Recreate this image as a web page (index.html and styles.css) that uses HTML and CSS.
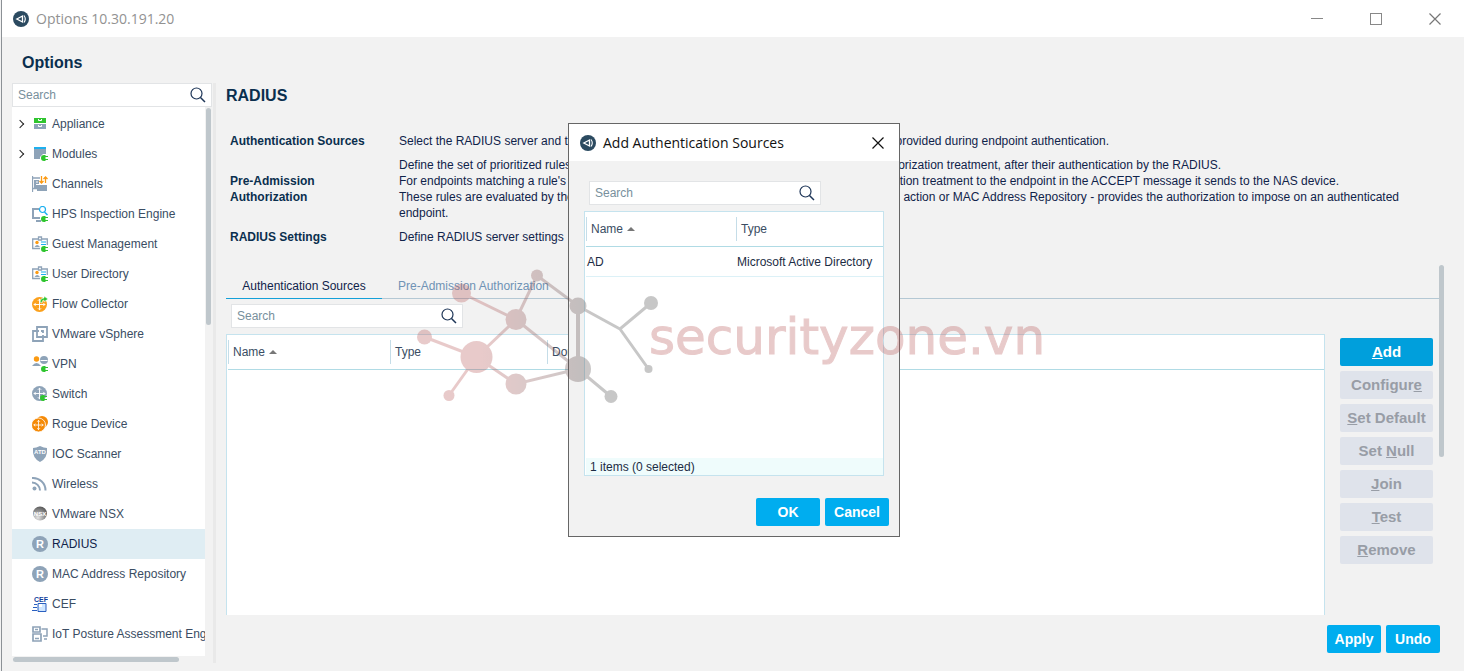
FILE: index.html
```html
<!DOCTYPE html>
<html lang="en">
<head>
<meta charset="utf-8">
<title>Options 10.30.191.20</title>
<link rel="stylesheet" href="styles.css">
</head>
<body>
<svg class="defs" aria-hidden="true">
  <symbol id="logo" viewBox="0 0 16 16"><circle cx="8" cy="8" r="8" fill="#2b4a60"/><path d="M3.800 8 9.500 5V11Z" fill="none" stroke="#fff" stroke-width="1.300"/><path d="M11 4.500Q13.600 8 11 11.500" fill="none" stroke="#fff" stroke-width="1.100"/></symbol>
  <symbol id="search" viewBox="0 0 16 16"><circle cx="6.500" cy="6.500" r="5.500" fill="none" stroke="#1d3557" stroke-width="1.200"/><path d="M10.500 10.500 15 15" stroke="#1d3557" stroke-width="1.500"/></symbol>
  <symbol id="close" viewBox="0 0 12 12"><path d="M.5.5 11.500 11.500M11.500.5.5 11.500" stroke="currentColor" stroke-width="1.200"/></symbol>
  <symbol id="plug" viewBox="0 0 7 6"><path d="M4.500 0H3a3 3 0 0 0-3 3 3 3 0 0 0 3 3h1.500V5H7V4H4.500V2H7V1H4.500Z" fill="#2fc52f"/></symbol>
  <symbol id="appliance" viewBox="0 0 16 16"><path d="M2 2h12v5H2Z" fill="#2fc52f"/><path d="M2 8h12v5H2Z" fill="#8ea3b8"/><path d="M6.500 3v1.500h3V3M6.500 9v1.500h3V9" fill="none" stroke="#fff"/></symbol>
  <symbol id="modules" viewBox="0 0 16 16"><path d="M2 1h12v12H2Z" fill="#8ea3b8"/><path d="M2 1h12v2H2Z" fill="#1db0ef"/><path d="M8 14V11l3-3h4v6Z" fill="#fff"/><use href="#plug" x="9" y="9" width="7" height="6"/></symbol>
  <symbol id="channels" viewBox="0 0 16 16"><path d="M.5 0v16M0 2h8M0 12.500h5" stroke="#8ea3b8" stroke-width="1.300"/><path d="M2 4h5v5h8v6H5v-3H2Z" fill="#8ea3b8"/><path d="M4 6h2M4 8.500h3" stroke="#fff"/><path d="M9.500 0v7M7.500 5l2 2 2-2M13.500 7V1M11.500 3l2-2 2 2" fill="none" stroke="#fb9a12" stroke-width="1.300"/></symbol>
  <symbol id="hps" viewBox="0 0 16 16"><path d="M7 3H1v9h7M4 15h5" fill="none" stroke="#8ea3b8" stroke-width="2"/><circle cx="10.500" cy="3.500" r="3" fill="#fff" stroke="#1db0ef" stroke-width="1.200"/><path d="m12.500 6 3 3" stroke="#1db0ef" stroke-width="1.500"/><use href="#plug" x="9" y="10" width="7" height="6"/></symbol>
  <symbol id="card" viewBox="0 0 16 16"><path d="M6 3H.7v9.500H8M10 3h5.300v6M6.500 1h3v3h-3Z" fill="none" stroke="#8ea3b8" stroke-width="1.300"/><circle cx="5" cy="6.500" r="1.700" fill="#fb9a12"/><path d="M2.500 11q2.500-4 5.500 0Z" fill="#8ea3b8"/><path d="M9 6h5M9 8.500h5" stroke="#1db0ef" stroke-width="1.200"/><use href="#plug" x="9" y="10" width="7" height="6"/></symbol>
  <symbol id="cross" viewBox="0 0 16 16"><path d="M8 2v12M2 8h12M6.300 4 8 2.300 9.700 4M6.300 12 8 13.700 9.700 12M4 6.300 2.300 8 4 9.700M12 6.300 13.700 8 12 9.700" fill="none" stroke="#fff"/></symbol>
  <symbol id="flow" viewBox="0 0 16 16"><circle cx="7.500" cy="8.500" r="7.500" fill="#fba01c"/><use href="#cross" y="1" width="15" height="15"/><path d="M8 6q0-4 4-4V0l4 3-4 3V4q-2 0-2 3Z" fill="#2fc52f" stroke="#fff" stroke-width=".6"/></symbol>
  <symbol id="vsphere" viewBox="0 0 16 16"><path d="M5 5V1h10v10h-4M5 5H1v10h10v-4M5 5h2M5 5v6h6V9M9 5h2v2" fill="none" stroke="#8ea3b8" stroke-width="1.800"/></symbol>
  <symbol id="vpn" viewBox="0 0 16 16"><circle cx="4.500" cy="3" r="2.700" fill="#fb9a12"/><path d="M0 10q4.500-6 9 0Z" fill="#8ea3b8"/><circle cx="12" cy="4" r="4" fill="#8ea3b8"/><path d="M8.500 4.500h7" stroke="#fff" fill="none"/><use href="#plug" x="9" y="10" width="7" height="6"/></symbol>
  <symbol id="switch" viewBox="0 0 16 16"><circle cx="7.500" cy="7.500" r="7.500" fill="#8ea3b8"/><use href="#cross" width="15" height="15"/><use href="#plug" x="8" y="9" width="7" height="6"/></symbol>
  <symbol id="rogue" viewBox="0 0 16 16"><circle cx="10" cy="6" r="6" fill="#f58a07"/><circle cx="6.500" cy="9" r="7" fill="#f58a07" stroke="#fff" stroke-width=".8"/><use href="#cross" y="2.500" width="13" height="13"/></symbol>
  <symbol id="wireless" viewBox="0 0 16 16"><circle cx="2.500" cy="12.500" r="2" fill="#8ea3b8"/><path d="M0 6.500a8 8 0 0 1 8 8M0 2a12.500 12.500 0 0 1 13.500 12.500" fill="none" stroke="#8ea3b8" stroke-width="2"/></symbol>
  <symbol id="iot" viewBox="0 0 16 16"><path d="M1 1h7v5H1ZM1 8h8v7H1Z" fill="none" stroke="#8ea3b8" stroke-width="1.700"/><path d="M3 3.500h3M3 12.500h4M9.500 3H15v7h-4M12 13h3" fill="none" stroke="#8ea3b8" stroke-width="1.500"/></symbol>
</svg>

<div class="window">
  <header class="titlebar">
    <svg class="icon"><use href="#logo"/></svg>
    <span class="window-title">Options 10.30.191.20</span>
    <div class="controls">
      <button aria-label="Minimize"><i class="minimize"></i></button>
      <button aria-label="Maximize"><i class="maximize"></i></button>
      <button aria-label="Close"><svg class="cross"><use href="#close"/></svg></button>
    </div>
  </header>

  <div class="body">
    <aside class="sidebar">
      <h1>Options</h1>
      <div class="panel">
        <label class="search wide"><input type="text" placeholder="Search" aria-label="Search options"><svg class="icon"><use href="#search"/></svg></label>
        <div class="tree-area">
          <ul class="tree">
            <li><a href="#"><i class="arrow"></i><svg class="icon"><use href="#appliance"/></svg>Appliance</a></li>
            <li><a href="#"><i class="arrow"></i><svg class="icon"><use href="#modules"/></svg>Modules</a></li>
            <li><a href="#"><svg class="icon"><use href="#channels"/></svg>Channels</a></li>
            <li><a href="#"><svg class="icon"><use href="#hps"/></svg>HPS Inspection Engine</a></li>
            <li><a href="#"><svg class="icon"><use href="#card"/></svg>Guest Management</a></li>
            <li><a href="#"><svg class="icon"><use href="#card"/></svg>User Directory</a></li>
            <li><a href="#"><svg class="icon"><use href="#flow"/></svg>Flow Collector</a></li>
            <li><a href="#"><svg class="icon"><use href="#vsphere"/></svg>VMware vSphere</a></li>
            <li><a href="#"><svg class="icon"><use href="#vpn"/></svg>VPN</a></li>
            <li><a href="#"><svg class="icon"><use href="#switch"/></svg>Switch</a></li>
            <li><a href="#"><svg class="icon"><use href="#rogue"/></svg>Rogue Device</a></li>
            <li><a href="#"><svg class="icon" viewBox="0 0 16 16"><path d="M8 0q4 2 7 2 1 10-7 14Q0 12 1 2q3 0 7-2Z" fill="#8ea3b8"/><text x="8" y="7.500" font-size="6" text-anchor="middle" class="glyph">ATD</text></svg>IOC Scanner</a></li>
            <li><a href="#"><svg class="icon"><use href="#wireless"/></svg>Wireless</a></li>
            <li><a href="#"><svg class="icon" viewBox="0 0 16 16"><radialGradient id="ball" cx=".35" cy=".8" r=".9"><stop stop-color="#e4e4e4"/><stop offset="1" stop-color="#4a4a4a"/></radialGradient><circle cx="8" cy="7.500" r="7" fill="url(#ball)"/><text x="8" y="9.500" font-size="6" text-anchor="middle" class="glyph">NSX</text></svg>VMware NSX</a></li>
            <li><a href="#" class="current"><svg class="icon" viewBox="0 0 16 16"><circle cx="8" cy="8" r="8" fill="#8ea3b8"/><text x="8" y="12" font-size="11" text-anchor="middle" class="glyph">R</text></svg>RADIUS</a></li>
            <li><a href="#"><svg class="icon" viewBox="0 0 16 16"><circle cx="8" cy="8" r="8" fill="#8ea3b8"/><text x="8" y="12" font-size="11" text-anchor="middle" class="glyph">R</text></svg>MAC Address Repository</a></li>
            <li><a href="#"><svg class="icon" viewBox="0 0 16 16"><path d="M6 7.500h8v8H6Z" fill="#cfe6ff" stroke="#2a5fc0"/><path d="M7 8h3v3H7Z" fill="#fff"/><path d="M2 8.500h3M1 11.500h4M0 14.500h5" stroke="#2a5fc0"/><text x="9" y="6" font-size="7" text-anchor="middle" class="glyph cef">CEF</text></svg>CEF</a></li>
            <li><a href="#"><svg class="icon"><use href="#iot"/></svg>IoT Posture Assessment Engine</a></li>
          </ul>
          <div class="track"><div class="thumb tree-thumb"></div></div>
        </div>
        <div class="thumb tree-thumb-x"></div>
      </div>
    </aside>

    <main class="main">
      <h2>RADIUS</h2>
      <dl class="about">
        <dt>Authentication Sources</dt>
        <dd><p class="line a"><span>Select the RADIUS server and the</span><span>provided during endpoint authentication.</span></p></dd>
        <dt>Pre-Admission Authorization</dt>
        <dd>
          <p class="line b"><span>Define the set of prioritized rules</span><span>authorization treatment, after their authentication by the RADIUS.</span></p>
          <p class="line c"><span>For endpoints matching a rule's</span><span>authorization treatment to the endpoint in the ACCEPT message it sends to the NAS device.</span></p>
          <p class="line d"><span>These rules are evaluated by the</span><span>action or MAC Address Repository - provides the authorization to impose on an authenticated</span></p>
          <p class="line"><span>endpoint.</span></p>
        </dd>
        <dt>RADIUS Settings</dt>
        <dd><p class="line"><span>Define RADIUS server settings</span></p></dd>
      </dl>

      <div class="scroll-area">
        <section class="sources">
          <nav class="tabs">
            <button class="tab active">Authentication Sources</button>
            <button class="tab">Pre-Admission Authorization</button>
          </nav>
          <div class="workspace">
            <div class="list">
              <label class="search"><input type="text" placeholder="Search" aria-label="Search sources"><svg class="icon"><use href="#search"/></svg></label>
              <div class="frame grow">
                <table class="grid">
                  <thead><tr><th class="c1"><span>Name<i class="sort"></i></span></th><th class="c2"><span>Type</span></th><th><span>Domain</span></th></tr></thead>
                </table>
              </div>
            </div>
            <div class="actions">
              <button class="btn add"><u>A</u>dd</button>
              <button class="btn" disabled>Configur<u>e</u></button>
              <button class="btn" disabled><u>S</u>et Default</button>
              <button class="btn" disabled>Set <u>N</u>ull</button>
              <button class="btn" disabled><u>J</u>oin</button>
              <button class="btn" disabled><u>T</u>est</button>
              <button class="btn" disabled><u>R</u>emove</button>
            </div>
          </div>
        </section>
        <div class="thumb main-thumb"></div>
      </div>
      <footer class="footer">
        <button class="btn primary">Apply</button>
        <button class="btn primary">Undo</button>
      </footer>
    </main>
  </div>
</div>

<div class="dialog" role="dialog" aria-label="Add Authentication Sources">
  <header class="dialog-title">
    <svg class="icon"><use href="#logo"/></svg>
    <h3>Add Authentication Sources</h3>
    <button aria-label="Close dialog"><svg class="cross"><use href="#close"/></svg></button>
  </header>
  <div class="dialog-body">
    <label class="search"><input type="text" placeholder="Search" aria-label="Search authentication sources"><svg class="icon"><use href="#search"/></svg></label>
    <div class="frame grow boxed">
      <table class="grid">
        <thead><tr><th class="half"><span>Name<i class="sort"></i></span></th><th><span>Type</span></th></tr></thead>
        <tbody><tr><td>AD</td><td>Microsoft Active Directory</td></tr></tbody>
      </table>
      <div class="status">1 items (0 selected)</div>
    </div>
    <div class="dialog-buttons">
      <button class="btn primary">OK</button>
      <button class="btn primary">Cancel</button>
    </div>
  </div>
</div>

<svg class="watermark" viewBox="0 0 640 140" aria-hidden="true">
  <defs><linearGradient id="fade" gradientUnits="userSpaceOnUse" x1="70" y1="0" x2="190" y2="0"><stop stop-color="#b65252"/><stop offset="1" stop-color="#484848"/></linearGradient></defs>
  <g opacity=".3">
    <g fill="none" stroke="url(#fade)" stroke-width="3">
      <path d="M51.500 28 106 54.500 127 10.500 168 41 210 64 241 38M210 64 238.500 104M106 54.500 66.500 92 14.500 72M66.500 92 39 130.500M66.500 92 106 119 168 104 106 54.500M168 104 201 131.500"/>
      <path d="M168 41 168.010 104" stroke-width="4"/>
    </g>
    <g fill="url(#fade)">
      <circle cx="51.500" cy="28" r="9.500"/><circle cx="127" cy="10.500" r="6"/><circle cx="106" cy="54.500" r="10.500"/><circle cx="168" cy="41" r="8.500"/><circle cx="66.500" cy="92" r="16"/><circle cx="14.500" cy="72" r="7.500"/><circle cx="39" cy="130.500" r="5.500"/><circle cx="106" cy="119" r="10.500"/><circle cx="168" cy="104" r="13"/><circle cx="201" cy="131.500" r="6.500"/><circle cx="241" cy="38" r="7"/><circle cx="238.500" cy="104" r="4"/>
    </g>
    <text x="239" y="89" font-size="50" class="brand">securityzone.vn</text>
  </g>
</svg>
</body>
</html>
```
FILE: styles.css
```css
* { box-sizing: border-box; }
body {
  margin: 0;
  height: 100vh;
  position: relative;
  overflow: hidden;
  background: #f2f2f2;
  color: #10234a;
  font: 12px/16px "Liberation Sans", Arial, sans-serif;
}
h1, h2, h3, p, dl, dd, ul { margin: 0; padding: 0; }
button, input { font: inherit; color: inherit; }
button { border: 0; background: none; padding: 0; }
.defs { position: absolute; width: 0; height: 0; }
.icon { width: 16px; height: 16px; flex: none; }
.glyph { font-family: "Liberation Sans", Arial, sans-serif; font-weight: bold; fill: #fff; }
.glyph.cef { fill: #123f9c; }
.cross { width: 12px; height: 12px; display: block; }

.window { height: 100%; display: flex; flex-direction: column; margin-left: 1px; border-left: 1px solid #8c9196; }
.titlebar { height: 37px; flex: none; display: flex; align-items: center; gap: 7px; padding: 0 23px 0 11px; background: #fff; }
.window-title { font: 14px/20px "Open Sans", sans-serif; color: #929292; }
.controls { margin-left: auto; display: flex; gap: 47px; color: #777; }
.controls button { width: 12px; height: 12px; display: flex; align-items: center; }
.minimize { width: 12px; height: 1px; background: #888; }
.maximize { width: 12px; height: 12px; border: 1px solid #888; }

.body { flex: 1; min-height: 0; display: flex; }
.sidebar { width: 214px; flex: none; padding: 16px 0 8px 10px; display: flex; flex-direction: column; }
.sidebar h1 { font: bold 16px/20px "Liberation Sans", Arial, sans-serif; color: #0a2f4e; padding: 0 10px; margin-bottom: 10px; }
.panel { flex: 1; min-height: 0; display: flex; flex-direction: column; border-right: 3px solid #e9e9e9; padding-right: 1px; }
.search { display: flex; align-items: center; width: 232px; height: 24px; flex: none; padding: 0 5px; background: #fff; border: 1px solid #e2e4e6; }
.search.wide { width: 100%; }
.search input { flex: 1; min-width: 0; border: 0; outline: 0; padding: 0; background: none; }
.search input::placeholder { color: #78909c; opacity: 1; }
.tree-area { flex: 1; min-height: 0; display: flex; }
.tree { list-style: none; flex: 1; min-width: 0; overflow: hidden; background: #fff; padding-top: 2px; }
.tree a { display: flex; align-items: center; gap: 4px; height: 30px; padding-left: 20px; position: relative; white-space: nowrap; color: #3a4d63; text-decoration: none; }
.tree a.current { background: #dfedf3; color: #10234a; }
.arrow { position: absolute; left: 5px; width: 6px; height: 6px; border: solid #222; border-width: 1px 1px 0 0; transform: rotate(45deg); }
.track { width: 7px; padding: 1px 1px 0; }
.thumb { background: #bfc7cc; border-radius: 3px; flex: none; }
.tree-thumb { height: 217px; }
.tree-thumb-x { width: 166px; height: 5px; margin: 1px; }

.main { flex: 1; min-width: 0; display: flex; flex-direction: column; padding: 49px 20px 18px 10px; }
.main h2 { font: bold 16px/20px "Liberation Sans", Arial, sans-serif; color: #0a2f4e; margin-bottom: 27px; }
.about { display: grid; grid-template-columns: 144px 1fr; column-gap: 25px; row-gap: 8px; padding-left: 4px; align-items: center; }
.about dt { font-weight: bold; color: #0a2f4e; }
.line { display: flex; justify-content: space-between; white-space: nowrap; max-width: 100%; }
.line.a { width: 710px; }
.line.b { width: 822px; }
.line.c { width: 940px; }
.line.d { width: 1000px; }

.scroll-area { flex: 1; min-height: 0; display: flex; margin-top: 20px; }
.main-thumb { width: 5px; height: 192px; }
.sources { flex: 1; min-width: 0; display: flex; flex-direction: column; padding-top: 8px; }
.tabs { display: flex; height: 26px; border-bottom: 1px solid #b4c8d4; flex: none; }
.tab { padding: 0 16px; height: 26px; color: #6f93b5; }
.tab.active { width: 156px; color: #10234a; border-bottom: 1px solid #14a0d8; }
.workspace { flex: 1; min-height: 0; display: flex; gap: 15px; padding: 5px 6px 0 0; }
.list { flex: 1; min-width: 0; display: flex; flex-direction: column; gap: 6px; }
.list .search { margin-left: 5px; }
.frame { display: flex; flex-direction: column; background: #fff; border: 1px solid #c5e3ee; border-bottom: 0; padding-left: 1px; }
.grow { flex: 1; min-height: 0; }
.boxed { border-bottom: 1px solid #c5e3ee; }
.grid { width: 100%; border-collapse: collapse; table-layout: fixed; color: #3a4d63; }
.grid th { height: 34px; padding: 0; text-align: left; font-weight: normal; border-bottom: 1px solid #b0dbe5; }
.grid th span { display: flex; align-items: center; gap: 4px; height: 24px; padding-left: 4px; border-left: 1px solid #c5dde8; }
.grid td { height: 30px; padding: 1px 0 0 1px; border-bottom: 1px solid #dcf1f7; white-space: nowrap; color: #1c2c44; }
.c1 { width: 162px; }
.c2 { width: 157px; }
.half { width: 150px; }
.sort { border: solid transparent; border-width: 0 4px 4px; border-bottom-color: #777; }
.actions { width: 93px; flex: none; display: flex; flex-direction: column; gap: 5px; padding-top: 34px; font-size: 15px; }
.btn { height: 28px; border-radius: 2px; font-weight: bold; background: #dfe3eb; color: #989da6; white-space: nowrap; }
.btn.add { background: #009fdc; color: #fff; }
.btn.primary { background: #00adef; color: #fff; font-size: 14px; }
.footer { display: flex; justify-content: flex-end; gap: 5px; padding: 10px 4px 0 0; flex: none; }
.footer .btn { width: 54px; }

.dialog { position: absolute; left: 568px; top: 123px; width: 332px; height: 414px; display: flex; flex-direction: column; background: #f2f2f2; border: 1px solid #666; }
.dialog-title { height: 37px; flex: none; display: flex; align-items: center; gap: 7px; padding: 0 15px 0 11px; background: #fff; }
.dialog-title h3 { font: 14px/20px "Open Sans", sans-serif; color: #111; }
.dialog-title button { margin-left: auto; color: #111; }
.dialog-body { flex: 1; min-height: 0; display: flex; flex-direction: column; padding: 20px 10px 10px 15px; }
.dialog .search { margin: 0 0 6px 5px; }
.dialog .frame { margin-right: 5px; }
.status { height: 17px; line-height: 18px; margin-top: auto; padding-left: 4px; background: #effcfc; color: #1c2c44; }
.dialog-buttons { display: flex; justify-content: flex-end; gap: 5px; padding-top: 22px; }
.dialog-buttons .btn { width: 64px; }

.watermark { position: absolute; left: 410px; top: 265px; width: 640px; height: 140px; pointer-events: none; }
.brand { font-family: "DejaVu Sans", sans-serif; fill: #b65252; stroke: #b65252; stroke-width: 1; }
```
